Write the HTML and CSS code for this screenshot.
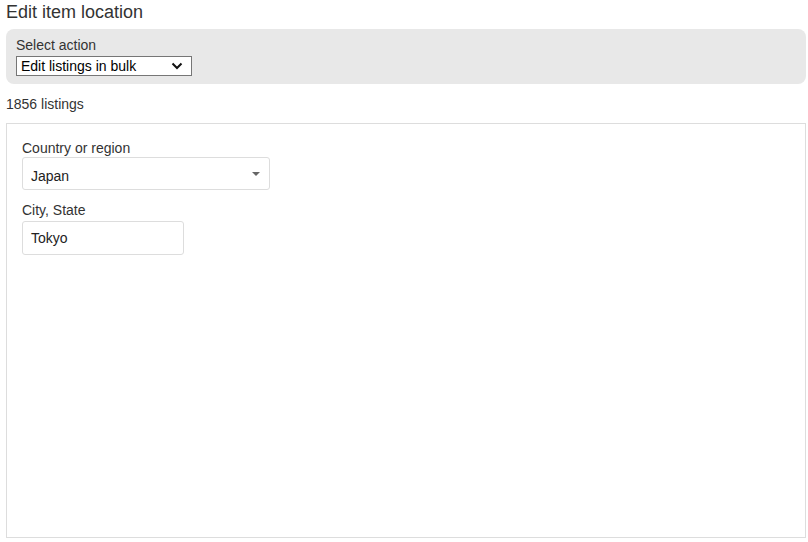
FILE: index.html
```html
<!DOCTYPE html>
<html lang="en">
<head>
<meta charset="utf-8">
<title>Edit item location</title>
<link rel="stylesheet" href="styles.css">
</head>
<body>
<div class="page">
  <h1 class="title">Edit item location</h1>
  <div class="action-panel">
    <div class="action-label">Select action</div>
    <div class="action-select">
      <span>Edit listings in bulk</span>
      <svg class="chevron" width="12" height="8" viewBox="0 0 12 8"><path d="M1.5 1.5 L6 6 L10.5 1.5" fill="none" stroke="#111" stroke-width="2"/></svg>
    </div>
  </div>
  <div class="count">1856 listings</div>
  <div class="form-box">
    <div class="field-label">Country or region</div>
    <div class="country-select">
      <span>Japan</span>
      <span class="caret"></span>
    </div>
    <div class="field-label second">City, State</div>
    <div class="city-input">Tokyo</div>
  </div>
</div>
</body>
</html>
```
FILE: styles.css
```css
html, body {
  margin: 0;
  padding: 0;
  background: #fff;
}
body {
  font-family: "Liberation Sans", Arial, sans-serif;
  color: #333;
}
.page {
  width: 800px;
  padding: 0 2px 0 6px;
}
.title {
  margin: 0;
  font-size: 18px;
  font-weight: normal;
  line-height: 24px;
  color: #333;
}
.action-panel {
  margin-top: 5px;
  height: 55px;
  box-sizing: border-box;
  padding: 8px 10px;
  background: #e8e8e8;
  border-radius: 8px;
}
.action-label {
  font-size: 14px;
  line-height: 17px;
  color: #333;
}
.action-select {
  margin-top: 2px;
  width: 176px;
  height: 20px;
  box-sizing: border-box;
  border: 1px solid #767676;
  background: #fff;
  display: flex;
  align-items: center;
  justify-content: space-between;
  padding: 0 8px 0 4px;
  font-size: 14px;
  color: #000;
}
.chevron {
  display: block;
}
.count {
  margin-top: 12px;
  font-size: 14px;
  line-height: 17px;
  color: #333;
}
.form-box {
  margin-top: 10px;
  height: 415px;
  box-sizing: border-box;
  border: 1px solid #ddd;
  padding: 16px 15px;
}
.field-label {
  font-size: 14px;
  line-height: 16px;
  color: #333;
  margin-bottom: 1px;
}
.field-label.second {
  margin-top: 12px;
  margin-bottom: 3px;
}
.country-select {
  width: 248px;
  height: 33px;
  box-sizing: border-box;
  border: 1px solid #ddd;
  border-radius: 3px;
  display: flex;
  align-items: center;
  justify-content: space-between;
  padding: 4px 9px 0 8px;
  font-size: 14px;
  color: #222;
}
.caret {
  width: 0;
  height: 0;
  border-left: 4px solid transparent;
  border-right: 4px solid transparent;
  border-top: 4px solid #666;
  margin-top: -3px;
}
.city-input {
  width: 162px;
  height: 34px;
  box-sizing: border-box;
  border: 1px solid #ddd;
  border-radius: 3px;
  display: flex;
  align-items: center;
  padding: 0 8px;
  font-size: 14px;
  color: #222;
}
```
